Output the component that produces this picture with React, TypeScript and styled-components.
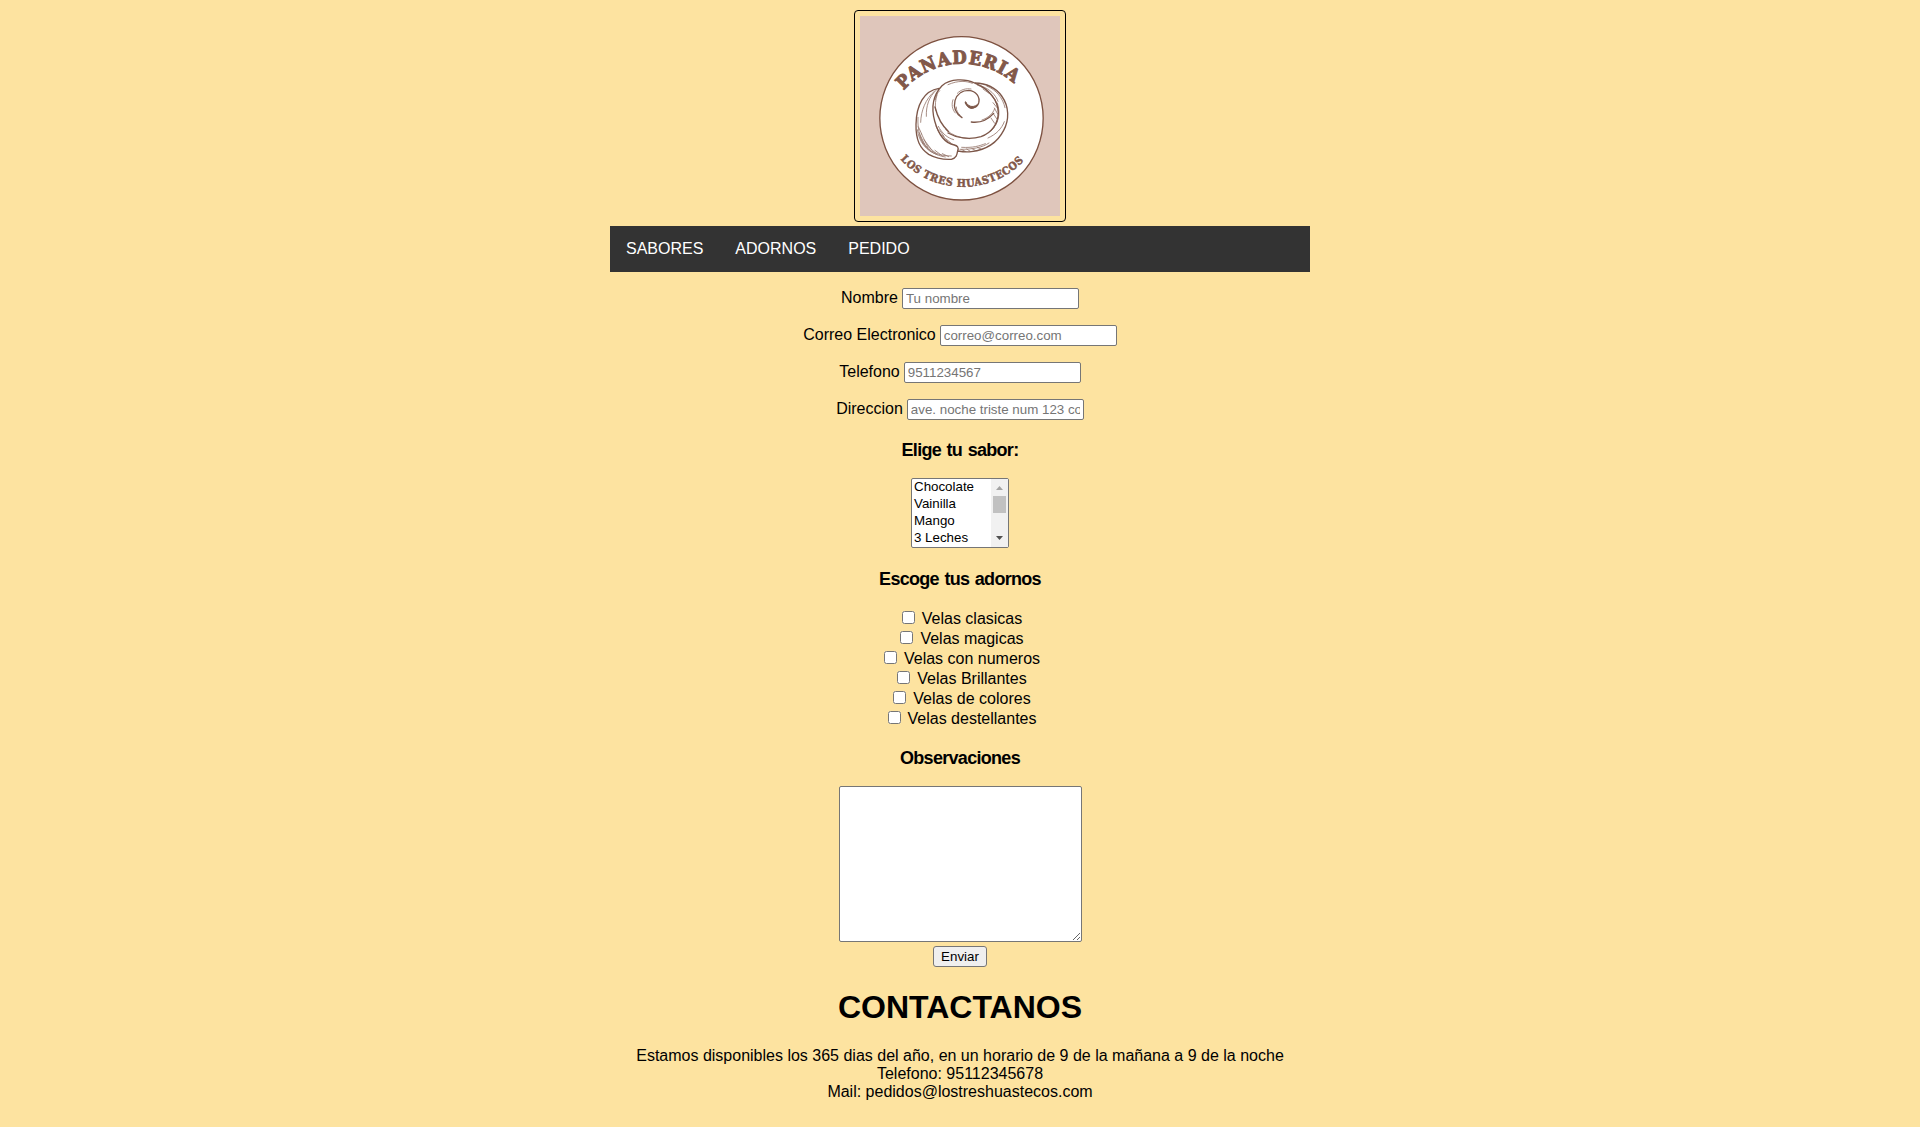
import React from "react";
import styled, { createGlobalStyle } from "styled-components";

const GlobalStyle = createGlobalStyle`
  html { background: #fde3a0; }
  body {
    margin: 0;
    background: #fde3a0;
    color: #000;
    font: 16px/18px "Liberation Sans", Arial, Helvetica, sans-serif;
  }
`;

const Page = styled.div`
  box-sizing: border-box;
  width: 700px;
  height: 1127px;
  margin: 0 auto;
  padding-top: 10px;
  display: flex;
  flex-direction: column;
  align-items: center;
`;

const LogoFrame = styled.a`
  display: block;
  box-sizing: border-box;
  width: 212px;
  height: 212px;
  padding: 5px;
  border: 1px solid #000;
  border-radius: 4px;
`;

const LogoArt = styled.svg`
  display: block;
  width: 200px;
  height: 200px;
`;

const Nav = styled.nav`
  display: flex;
  align-self: stretch;
  height: 46px;
  margin-top: 4px;
  background: #333;
`;

const NavLink = styled.a`
  padding: 14px 16px;
  color: #fff;
  text-decoration: none;
`;

const Form = styled.form`
  display: flex;
  flex-direction: column;
  align-items: center;
  padding-top: 16px;
`;

const Fields = styled.div`
  display: flex;
  flex-direction: column;
  align-items: center;
  gap: 16px;
`;

const Field = styled.label`
  display: flex;
  align-items: flex-start;
  gap: 4px;
  height: 21px;
  line-height: 20px;
`;

const Input = styled.input`
  box-sizing: border-box;
  width: 177px;
  height: 21px;
  margin: 0;
  padding: 1px 3px;
  border: 1px solid #767676;
  border-radius: 2px;
  background: #fff;
  font: 13.333px "Liberation Sans", Arial, sans-serif;
  &::placeholder { color: #757575; opacity: 1; }
`;

const Heading = styled.h3<{ $top: number; $bottom?: number }>`
  height: 21px;
  margin: ${(p) => p.$top}px 0 ${(p) => p.$bottom ?? 17}px;
  white-space: nowrap;
  font: bold 18px/21px "Liberation Sans", Arial, sans-serif;
  letter-spacing: -0.7px;
  word-spacing: 1.2px;
`;

const ListBox = styled.div`
  display: flex;
  box-sizing: border-box;
  width: 98px;
  height: 70px;
  border: 1px solid #767676;
  border-radius: 2px;
  background: #fff;
`;

const Options = styled.div`
  flex: 1;
  overflow: hidden;
`;

const Option = styled.div`
  height: 17px;
  padding-left: 2px;
  font-size: 13.333px;
  line-height: 16px;
`;

const Scrollbar = styled.div`
  display: flex;
  flex-direction: column;
  align-items: center;
  justify-content: space-between;
  width: 17px;
  background: #f1f1f1;
`;

const Thumb = styled.div`
  width: 13px;
  height: 17px;
  margin-bottom: 17px;
  background: #c1c1c1;
`;

const Arrow = styled.svg`
  display: block;
  width: 17px;
  height: 17px;
`;

const Choices = styled.div`
  display: flex;
  flex-direction: column;
  align-items: center;
`;

const Choice = styled.label`
  display: flex;
  align-items: flex-start;
  height: 20px;
`;

const Checkbox = styled.input`
  width: 13px;
  height: 13px;
  margin: 1px 7px 0 4px;
`;

const Notes = styled.textarea`
  display: block;
  box-sizing: border-box;
  width: 243px;
  height: 156px;
  margin: 0;
  padding: 2px;
  border: 1px solid #767676;
  border-radius: 2px;
  background: #fff;
`;

const Submit = styled.button`
  box-sizing: border-box;
  width: 54px;
  height: 21px;
  margin: 4px 0 0;
  padding: 0;
  border: 1px solid #767676;
  border-radius: 3px;
  background: #efefef;
  color: #000;
  font: 13.333px "Liberation Sans", Arial, sans-serif;
`;

const Footer = styled.footer`
  text-align: center;
  white-space: nowrap;
`;

const FooterTitle = styled.h1`
  margin: 22px 0 21px;
  font-size: 32px;
  line-height: 37px;
`;

const FooterText = styled.p`
  margin: 0;
`;

function Logo() {
  return (
    <LogoArt viewBox="45 48 600 600" role="img" aria-label="Panaderia Los Tres Huastecos">
      <rect x="45" y="48" width="600" height="600" fill="#dfc6bb" />
      <circle cx="349.5" cy="355" r="245" fill="#fff" stroke="#7d5140" strokeWidth="4" />
      <path id="topArc" d="M176 271A232 232 0 0 1 516 260" fill="none" />
      <path id="bottomArc" d="M166 478A254 254 0 0 0 542 477" fill="none" />
      <g fill="#82584a" stroke="#82584a" fontFamily="DejaVu Serif Condensed, DejaVu Serif, serif" fontStretch="condensed" fontWeight="700">
        <text fontSize="55" strokeWidth="3">
          <textPath href="#topArc" textLength="368">PANADERIA</textPath>
        </text>
        <text fontSize="32" strokeWidth="1.5">
          <textPath href="#bottomArc" textLength="415">LOS TRES HUASTECOS</textPath>
        </text>
      </g>
      <g fill="none" stroke="#7d5749" strokeLinecap="round" strokeLinejoin="round">
        <g strokeWidth="4">
          <path d="M282 265C236 272 214 316 213 373C212 420 225 445 251 463C276 477 300 479 319 478C335 474 336 464 338 452C342 443 337 437 328 435C298 430 280 402 269 363C257 318 267 282 291 257C316 236 360 235 389 249C424 250 452 263 470 288C493 320 493 359 476 391C456 430 418 450 379 455C363 457 350 455 339 453" />
          <path d="M391 250C432 266 459 301 460 338C459 371 440 399 408 410C372 421 333 413 309 399" />
          <path d="M351 353C333 341 325 322 330 302C336 281 352 271 372 271C393 273 406 291 401 309C396 325 371 331 361 308" />
          <path d="M270 321C278 354 292 378 311 395M379 366C403 369 427 361 446 340" />
        </g>
        <path d="M362 306C368 318 382 325 397 314C386 332 367 328 362 306Z" fill="#7d5749" strokeWidth="3" />
        <g strokeWidth="2.5" opacity="0.8">
          <path d="M275 269C251 291 243 318 244 349M268 274C242 297 228 331 227 367M219 352C217 393 226 424 249 444M217 389C222 426 244 454 277 464M224 407C234 444 266 466 301 471M232 427C253 456 282 468 319 468M273 378C285 409 304 428 327 434M280 379C291 400 307 414 326 419M302 389C326 409 350 414 374 416M324 299C319 312 321 328 331 339M334 321C333 331 339 341 345 345M337 280C347 269 363 264 378 267" />
          <path d="M397 255C426 267 446 285 454 309M409 258C434 267 452 284 459 304M450 298C469 335 462 370 437 394M457 309C468 342 460 373 438 392M425 258C454 269 474 295 480 323M429 414C454 403 470 386 478 365M345 448C384 448 411 443 432 429M350 442C383 444 403 438 421 431M411 360C429 354 444 341 449 326M276 285C271 300 270 316 272 331M284 272C276 279 273 290 271 299M309 254C341 240 365 243 382 250" />
          <path d="M222 398L239 433M229 401L247 438M220 380L230 402M237 419L258 447M247 438L273 460M270 451L292 468M292 461L311 470M350 449L361 454M365 447L376 454M381 446L391 451M397 442L408 447M444 308L457 324M448 324L458 342M445 341L455 356M438 354L449 370M414 267L432 280M432 278L446 295M283 389L297 409M291 404L307 423M303 417L319 430" />
        </g>
      </g>
    </LogoArt>
  );
}

const fields = [
  ["Nombre", "Tu nombre"],
  ["Correo Electronico", "correo@correo.com"],
  ["Telefono", "9511234567"],
  ["Direccion", "ave. noche triste num 123 col. centro"],
];
const flavours = ["Chocolate", "Vainilla", "Mango", "3 Leches"];
const candles = [
  "Velas clasicas",
  "Velas magicas",
  "Velas con numeros",
  "Velas Brillantes",
  "Velas de colores",
  "Velas destellantes",
];

export default function App() {
  return (
    <>
      <GlobalStyle />
      <Page>
        <LogoFrame>
          <Logo />
        </LogoFrame>
        <Nav>
          <NavLink>SABORES</NavLink>
          <NavLink>ADORNOS</NavLink>
          <NavLink>PEDIDO</NavLink>
        </Nav>
        <Form>
          <Fields>
            {fields.map(([label, hint]) => (
              <Field key={label}>
                {label}
                <Input placeholder={hint} />
              </Field>
            ))}
          </Fields>
          <Heading $top={20}>Elige tu sabor:</Heading>
          <ListBox>
            <Options>
              {flavours.map((name) => (
                <Option key={name}>{name}</Option>
              ))}
            </Options>
            <Scrollbar>
              <Arrow viewBox="0 0 17 17">
                <path d="M5 11h7L8.500 7z" fill="#a3a3a3" />
              </Arrow>
              <Thumb />
              <Arrow viewBox="0 0 17 17">
                <path d="M5 6h7L8.500 10z" fill="#505050" />
              </Arrow>
            </Scrollbar>
          </ListBox>
          <Heading $top={21} $bottom={20}>Escoge tus adornos</Heading>
          <Choices>
            {candles.map((name) => (
              <Choice key={name}>
                <Checkbox type="checkbox" />
                {name}
              </Choice>
            ))}
          </Choices>
          <Heading $top={18}>Observaciones</Heading>
          <Notes />
          <Submit type="button">Enviar</Submit>
        </Form>
        <Footer>
          <FooterTitle>CONTACTANOS</FooterTitle>
          <FooterText>
            Estamos disponibles los 365 dias del año, en un horario de 9 de la mañana a 9 de la noche
          </FooterText>
          <FooterText>Telefono: 95112345678</FooterText>
          <FooterText>Mail: pedidos@lostreshuastecos.com</FooterText>
        </Footer>
      </Page>
    </>
  );
}
